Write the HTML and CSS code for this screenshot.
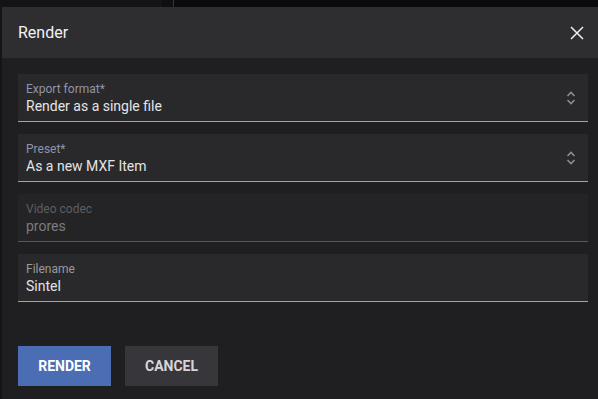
FILE: index.html
```html
<!DOCTYPE html>
<html>
<head>
    <title>Render</title>
    <link rel="stylesheet" href="styles.css">
</head>
<body>
    <div class="topbar">
        <div class="topbar-left"></div>
        <div class="topbar-gap"></div>
        <div class="topbar-line"></div>
        <div class="topbar-rest"></div>
    </div>
    <div class="page">
        <div class="side"></div>
        <div class="dialog">
            <div class="dialog-header">
                <h2 class="dialog-title">Render</h2>
                <svg class="close-icon" width="14" height="14" viewBox="0 0 14 14">
                    <path d="M1 1 L13 13 M13 1 L1 13" stroke="#f0f0f0" stroke-width="1.5" fill="none"/>
                </svg>
            </div>
            <div class="dialog-body">
                <div class="field">
                    <div class="field-text">
                        <label class="field-label">Export format*</label>
                        <div class="field-value">Render as a single file</div>
                    </div>
                    <svg class="select-icon" width="10" height="14" viewBox="0 0 10 14">
                        <path d="M1.5 5 L5 1.5 L8.5 5 M1.5 9 L5 12.5 L8.5 9" stroke="#8c8c92" stroke-width="1.6" fill="none"/>
                    </svg>
                </div>
                <div class="field">
                    <div class="field-text">
                        <label class="field-label">Preset*</label>
                        <div class="field-value">As a new MXF Item</div>
                    </div>
                    <svg class="select-icon" width="10" height="14" viewBox="0 0 10 14">
                        <path d="M1.5 5 L5 1.5 L8.5 5 M1.5 9 L5 12.5 L8.5 9" stroke="#8c8c92" stroke-width="1.6" fill="none"/>
                    </svg>
                </div>
                <div class="field disabled">
                    <div class="field-text">
                        <label class="field-label">Video codec</label>
                        <div class="field-value">prores</div>
                    </div>
                </div>
                <div class="field">
                    <div class="field-text">
                        <label class="field-label plain">Filename</label>
                        <div class="field-value">Sintel</div>
                    </div>
                </div>
                <div class="actions">
                    <button class="btn btn-primary">Render</button>
                    <button class="btn btn-secondary">Cancel</button>
                </div>
            </div>
        </div>
    </div>
</body>
</html>
```

FILE: styles.css
```css
/* Page base */
html, body {
    margin: 0;
    padding: 0;
    height: 100%;
}

body {
    background-color: #0d0d0f;
    font-family: Roboto, "Liberation Sans", sans-serif;
    overflow: hidden;
}

/* Strip of the app behind the dialog */
.topbar {
    display: flex;
    height: 7px;
}

.topbar-left {
    width: 162px;
    background-color: #141417;
}

.topbar-gap {
    width: 11px;
    background-color: #0f0f12;
}

.topbar-line {
    width: 1px;
    background-color: #2a3555;
}

.topbar-rest {
    flex: 1;
    background-color: #0b0b0d;
}

.page {
    display: flex;
    height: 392px;
}

.side {
    width: 2px;
    background-color: #151517;
}

/* Dialog */
.dialog {
    flex: 1;
    display: flex;
    flex-direction: column;
    background-color: #1f1f21;
}

.dialog-header {
    display: flex;
    align-items: center;
    justify-content: space-between;
    height: 51px;
    padding: 0 14px 0 16px;
    background-color: #2e2e30;
}

.dialog-title {
    margin: 0;
    font-size: 16px;
    font-weight: 400;
    color: #f2f2f4;
}

.close-icon {
    display: block;
}

.dialog-body {
    display: flex;
    flex-direction: column;
    gap: 12px;
    padding: 16px 10px 0 16px;
}

/* Form fields */
.field {
    display: flex;
    align-items: center;
    height: 47px;
    padding: 0 12px 0 8px;
    background-color: #29292b;
    border-bottom: 1px solid #a2a2aa;
}

.field-text {
    flex: 1;
    display: flex;
    flex-direction: column;
    padding-top: 1px;
}

.field-label {
    font-size: 12px;
    line-height: 16px;
    color: #8f95a8;
}

.field-label.plain {
    color: #9a9a9e;
}

.field-value {
    font-size: 14px;
    line-height: 18px;
    color: #e4e4e6;
}

.field.disabled {
    background-color: #242426;
    border-bottom-color: #58585c;
}

.field.disabled .field-label {
    color: #5e5e62;
}

.field.disabled .field-value {
    color: #7c7c80;
}

.select-icon {
    display: block;
}

/* Buttons */
.actions {
    display: flex;
    gap: 14px;
    margin-top: 32px;
}

.btn {
    width: 93px;
    height: 40px;
    border: none;
    border-radius: 0;
    font-family: Roboto, "Liberation Sans", sans-serif;
    font-size: 14px;
    font-weight: 700;
    text-transform: uppercase;
    cursor: pointer;
}

.btn-primary {
    background-color: #4a6db4;
    color: #ffffff;
}

.btn-secondary {
    background-color: #37373b;
    color: #d6d6da;
}
```
